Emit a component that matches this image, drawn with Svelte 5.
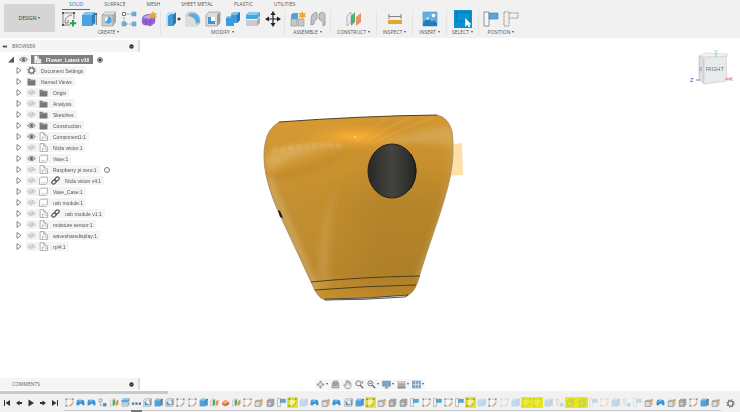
<script>
	let activeTab = 'SOLID';
	let tabs = ['SOLID', 'SURFACE', 'MESH', 'SHEET METAL', 'PLASTIC', 'UTILITIES'];

	let groups = [
		{ label: 'CREATE', tools: ['newsketch', 'extrude', 'hole', 'pattern', 'form'] },
		{ label: 'MODIFY', tools: ['presspull', 'fillet', 'shell', 'combine', 'split', 'move'] },
		{ label: 'ASSEMBLE', tools: ['newcomp', 'joint'] },
		{ label: 'CONSTRUCT', tools: ['plane'] },
		{ label: 'INSPECT', tools: ['measure'] },
		{ label: 'INSERT', tools: ['image'] },
		{ label: 'SELECT', tools: ['select'] },
		{ label: 'POSITION', tools: ['capture', 'revert'] }
	];

	let tree = [
		{ name: 'Document Settings', icon: 'gear' },
		{ name: 'Named Views', icon: 'folder' },
		{ name: 'Origin', icon: 'folder', eye: 'off' },
		{ name: 'Analysis', icon: 'folder', eye: 'off' },
		{ name: 'Sketches', icon: 'folder', eye: 'off' },
		{ name: 'Construction', icon: 'folder', eye: 'on' },
		{ name: 'Component1:1', icon: 'component', eye: 'on' },
		{ name: 'Nicla vision:1', icon: 'component', eye: 'off' },
		{ name: 'Vase:1', icon: 'body', eye: 'on' },
		{ name: 'Raspberry pi zero:1', icon: 'component', eye: 'off', radio: true },
		{ name: 'Nicla vision v4:1', icon: 'body', eye: 'off', linked: true },
		{ name: 'Vase_Case:1', icon: 'body', eye: 'off' },
		{ name: 'usb module:1', icon: 'body', eye: 'off' },
		{ name: 'usb module v1:1', icon: 'component', eye: 'off', linked: true },
		{ name: 'moisture sensor:1', icon: 'component', eye: 'off' },
		{ name: 'wavesharedisplay:1', icon: 'component', eye: 'off' },
		{ name: 'rpi4:1', icon: 'component', eye: 'off' }
	];

	// "!" = highlighted, "~" = suppressed
	let timeline = (
		'sketch revolve revolve comps plane split dots shell extrude shell sketch sketch extrude plane orange plane ' +
		'sketch bodystar graybox capture !sketch ~extrude revolve bodystar revolve shell extrude !sketch bodystar ' +
		'graybox graybox capture sketch capture sketch capture !sketch ~extrude sketch ~sketch ~extrude !~sketch ' +
		'!~sketch ~extrude ~comps !~graybox !~graybox ~capture ~sketch ~extrude ~comps ~capture bodystar revolve ' +
		'bodystar graybox sketch extrude bodystar'
	).split(' ').map((s) => ({
		icon: s.replace(/[!~]/g, ''),
		marked: s.includes('!'),
		faint: s.includes('~')
	}));

	let navTools = [
		{ icon: 'orbit', menu: true },
		{ icon: 'look' },
		{ icon: 'pan' },
		{ icon: 'zoom' },
		{ icon: 'fit', menu: true },
		{ icon: 'display', menu: true },
		{ icon: 'effects', menu: true },
		{ icon: 'grid', menu: true }
	];

	let playback = ['first', 'prev', 'play', 'next', 'last'];
</script>

{#snippet icon(name)}
	<svg class="icon" viewBox="0 0 16 16" aria-hidden="true">
		{#if name === 'newsketch'}
			<path d="M2 2h11M2 2v12h7M13 2v6" fill="none" stroke="#777" stroke-width=".9" />
			<path d="M4 12c0-5 2-7 7-8M4 12h3v-3" fill="none" stroke="#666" stroke-width=".8" />
			<path d="M1 1h2v2H1zM12 1h2v2h-2zM1 13h2v2H1z" fill="#555" />
			<path d="M12 9v6.500M8.800 12.300h6.400" stroke="#24a148" stroke-width="1.900" />
		{:else if name === 'sketch'}
			<path d="M2 2h12v7l-4 5H2z" fill="#fff8" stroke="#999" stroke-width="1" />
			<path d="M1 1h2v2H1zM13 1h2v2h-2zM1 13h2v2H1z" fill="#555" />
			<path d="M9 14l5-5" stroke="#e99b48" stroke-width="2.400" />
		{:else if name === 'extrude'}
			<path d="M1 4l3-3h10l-3 3z" fill="#83c4ee" />
			<path d="M1 4h10v11H1z" fill="#4aa3df" />
			<path d="M11 4l3-3v11l-3 3z" fill="#2c7fbc" />
			<path d="M15.200 14V2M14 4l1.200-2L16 4" fill="none" stroke="#444" stroke-width=".9" />
		{:else if name === 'hole'}
			<path d="M1 4l3-3h11l-3 3z" fill="#e9e9e9" stroke="#999" stroke-width=".6" />
			<path d="M1 4h11v11H1z" fill="#ccc" stroke="#999" stroke-width=".6" />
			<path d="M12 4l3-3v10l-3 4z" fill="#aaa" />
			<circle cx="7" cy="9" r="3.800" fill="#f8f8f8" stroke="#999" stroke-width=".5" />
			<path d="M7 5.500a3.500 3.500 0 1 1-3.200 5C6 10.500 7 8.500 7 5.500z" fill="#49a2dc" />
		{:else if name === 'pattern'}
			<path d="M3 3h10M3 3v10h10" fill="none" stroke="#999" stroke-dasharray="2 1" />
			<path d="M1.500 1.500h3v3h-3z" fill="#fff" stroke="#777" />
			<path d="M11 1h4v4h-4zM1 11h4v4H1zM11 11h4v4h-4z" fill="#67b3e8" stroke="#6391b3" stroke-width=".5" />
		{:else if name === 'form'}
			<path d="M1 7q1-3 5-4l7 1q2 1 1 8l-4 3-7-1q-3-1-2-7z" fill="#9168d3" />
			<path d="M2 7q2-3 5-3l5 1-3 3z" fill="#c2a5ec" />
			<path d="M2 10q4 2 7 1l5-3M9 8v7M5 7v7" fill="none" stroke="#7147b5" stroke-width=".7" />
			<path d="M12 0l1.200 2.300L16 2l-1.200 2.200L16 6.500l-2.700-.4L12 8.500l-1-2.400-2.500.4L9.800 4 8.500 2l2.400.3z" fill="#f5a72a" />
		{:else if name === 'presspull'}
			<path d="M1 4l3-3h6L7 4v11H1z" fill="#b9dff6" />
			<path d="M3 5l3-2h3v12H3z" fill="#3f9ad7" />
			<path d="M8 4l3-3v11l-3 3z" fill="#2c78ad" />
			<path d="M12 8h3" stroke="#333" stroke-width="1" />
			<path d="M13.500 6L16 8l-2.500 2z" fill="#333" />
		{:else if name === 'fillet'}
			<path d="M1 15V6q0-5 5-5 9 0 9 9v2l-3 3z" fill="#cdcdcd" stroke="#aaa" stroke-width=".5" />
			<path d="M1 15V6q3-2 6 1 5 2 5 8z" fill="#ddd" />
			<path d="M4 3q10-3 11 8l-4 2Q11 6 4 5z" fill="#59ace4" />
		{:else if name === 'shell'}
			<path d="M1 4l3-3h11v11l-3 3H1z" fill="#ddd" stroke="#888" stroke-width=".6" />
			<path d="M12 4l3-3v11l-3 3z" fill="#999" />
			<path d="M3 6h7v7H3z" fill="#fff" />
			<path d="M3 6h3v5l-3 2zM6 10h4v3H3z" fill="#3e97d4" />
		{:else if name === 'combine'}
			<path d="M6 3l3-2h6v8l-3 3H9v3H1V7l2-2h3z" fill="#4099d8" />
			<path d="M6 3l3-2h6l-3 3H6zM1 7l2-2h3v2z" fill="#7bc0ed" />
			<path d="M12 4l3-3v8l-3 3z" fill="#2878b3" />
		{:else if name === 'split'}
			<path d="M1 4l3-3h11v4l-3 3H1z" fill="#4aa4df" />
			<path d="M1 4l3-3h11l-3 3z" fill="#8bcbf1" />
			<path d="M1 9h11l3-3v6l-3 3H1z" fill="#aaa" />
			<path d="M1 9h11v6H1z" fill="#ccc" />
		{:else if name === 'move'}
			<path d="M8 2v12M2 8h12" stroke="#222" stroke-width="1.200" />
			<path d="M8 0l2.500 4h-5zM8 16l2.500-4h-5zM0 8l4-2.500v5zM16 8l-4-2.500v5z" fill="#222" />
		{:else if name === 'newcomp'}
			<path d="M1 4l2-2h5v6H1z" fill="#4ba4df" />
			<path d="M1 8h6v7H1zM8 8h6v7H8z" fill="#c7c7c7" stroke="#999" stroke-width=".7" />
			<path d="M12 0l1.200 2.300L16 2l-1.200 2.200L16 6.500l-2.700-.4L12 8.500l-1-2.400-2.500.4L9.800 4 8.500 2l2.400.3z" fill="#f5a72a" />
		{:else if name === 'joint'}
			<path d="M2 4l4-3 1 1v6l-3 2v3l-3 1V8zM9 3l3-2 3 2v11l-2 1v-4l-4-3z" fill="#c4c4c4" stroke="#8a8a8a" stroke-width=".7" />
		{:else if name === 'plane'}
			<path d="M1 5l4-4v10l-4 4z" fill="#eee" stroke="#999" stroke-width=".7" />
			<path d="M5 5l4-4v10l-4 4z" fill="#4daf72" />
			<path d="M10 6l5-4v9l-5 4z" fill="#ed9062" />
		{:else if name === 'measure'}
			<path d="M2 3v5M14 3v5M2 5.500h12" stroke="#777" stroke-width=".9" />
			<path d="M1 9h14v4H1z" fill="#e6a52b" />
		{:else if name === 'image'}
			<path d="M1 1h14v14H1z" fill="#61b0e6" stroke="#4c98cb" stroke-width=".6" />
			<circle cx="11.500" cy="4.500" r="1.800" fill="#fff" />
			<path d="M1 12l5-6 4 5 2-2 3 3v3H1z" fill="#247cb6" />
			<path d="M4 8l2-2 2 3-2-1-1 1z" fill="#fff" />
		{:else if name === 'select'}
			<path d="M0 0h16v16H0z" fill="#0a91d2" />
			<path d="M2 2h12v8H2z" fill="none" stroke="#075d89" stroke-dasharray="2 1" stroke-width=".6" />
			<path d="M10 7v8l2-1.800 1 2.300 1.500-.7-1-2h2z" fill="#fff" />
		{:else if name === 'capture'}
			<path d="M1 1h5v14H1z" fill="#f7f7f7" stroke="#888" stroke-width=".9" />
			<path d="M6 2h9v6H6z" fill="#55a7df" stroke="#397cac" stroke-width=".6" />
		{:else if name === 'revert'}
			<path d="M1 1h5v14H1zM6 2h9v5H6" fill="none" stroke="#999" stroke-width=".9" stroke-dasharray="3 .5" />
		{:else if name === 'revolve'}
			<path d="M1 13V7q1-5 5-4h4q5 0 5 6v4h-4v-3H6v3z" fill="#348ed0" />
			<path d="M2 7q2-4 7-3l3 2H6z" fill="#8dcaf1" />
		{:else if name === 'comps'}
			<path d="M2 2h5v5H2z" fill="#eee" stroke="#777" />
			<path d="M9 9h6v6H9z" fill="#3d96d3" />
			<path d="M4 8v5h4" fill="none" stroke="#777" />
		{:else if name === 'dots'}
			<path d="M0 6h4v4H0zM6 6h4v4H6zM12 6h4v4h-4z" fill="#5a7082" />
		{:else if name === 'orange'}
			<path d="M2 8l6-5 6 4v5l-7 3-5-3z" fill="#df7c38" />
			<path d="M2 8l6-5 6 4-7 3z" fill="#efae80" />
			<path d="M9 12l6-3" stroke="#6c6c6c" stroke-width="1.500" />
		{:else if name === 'bodystar'}
			<path d="M2 6l3-2h9v8l-3 3H2z" fill="#ddd" stroke="#777" />
			<path d="M2 6h9v9M11 6l3-2" fill="none" stroke="#777" />
			<path d="M9 6l5-5 2 3-4 4z" fill="#f0a03a" />
		{:else if name === 'graybox'}
			<path d="M2 5l3-3h9v10l-3 3H2z" fill="#bbb" stroke="#777" />
			<path d="M2 5h9v10M11 5l3-3" fill="none" stroke="#777" />
			<path d="M4 8h5v4H4z" fill="#eee" stroke="#777" stroke-width=".7" />
		{:else if name === 'gear'}
			<circle cx="8" cy="8" r="4.600" fill="none" stroke="#777" stroke-width="2.400" />
			<circle cx="8" cy="8" r="6.500" fill="none" stroke="#777" stroke-width="2" stroke-dasharray="2.500 2.600" />
		{:else if name === 'folder'}
			<path d="M1 3h5l1 2h8v10H1z" fill="#777" />
			<path d="M1 6h14" stroke="#bbb" stroke-width=".7" />
		{:else if name === 'component'}
			<path d="M2 1h6l3 3v3h4v8H2z" fill="#fff" stroke="#888" stroke-width="1.100" />
			<path d="M8 1v4h3M6 15V9h4M10 11h5" fill="none" stroke="#888" />
		{:else if name === 'body'}
			<path d="M1 5l3-3h11v9l-3 4H1z" fill="#fff" stroke="#888" stroke-width="1.100" />
			<path d="M4 12h6l2-2" fill="none" stroke="#999" />
		{:else if name === 'link'}
			<g transform="rotate(-45 8 8)" fill="none" stroke="#444" stroke-width="1.900">
				<rect x="0" y="5" width="8.500" height="6" rx="3" />
				<rect x="7.500" y="5" width="8.500" height="6" rx="3" />
			</g>
		{:else if name === 'eye-on' || name === 'eye-off'}
			<g opacity={name === 'eye-on' ? 1 : 0.45}>
				<path d="M1 8q7-8 14 0-7 8-14 0z" fill="#ddd" stroke="#666" stroke-width="1.300" />
				<circle cx="8" cy="8" r="2.800" fill="#666" />
			</g>
			{#if name === 'eye-off'}<path d="M6 3l4 10" stroke="#f3f3f3" stroke-width="1.500" />{/if}
		{:else if name === 'orbit'}
			<path d="M8 1l3 3H5zM8 15l3-3H5zM1 8l3-3v6zM15 8l-3-3v6z" fill="#888" />
			<circle cx="8" cy="8" r="3.500" fill="#ddd" stroke="#888" />
		{:else if name === 'look'}
			<path d="M2 6h12v8H2zM4 2h8v3H4z" fill="#ccc" stroke="#777" stroke-width="1.200" />
			<path d="M4 9h8" stroke="#777" stroke-width="2" />
		{:else if name === 'pan'}
			<path d="M5 15L1 9l1-1 3 2V3h2V1h2v2h3v2h2v6l-2 4z" fill="#eee" stroke="#777" stroke-width="1.100" />
			<path d="M7 3v5M9.500 3v5M12 5v4" stroke="#777" stroke-width=".8" />
		{:else if name === 'zoom' || name === 'fit'}
			<circle cx="6" cy="6" r="4.500" fill="#eee" stroke="#666" stroke-width="1.400" />
			<path d="M9.500 9.500l5 5" stroke="#555" stroke-width="2.300" />
			{#if name === 'zoom'}
				<path d="M13 2v5M11 4l2-2 2 2" fill="none" stroke="#666" />
			{:else}
				<path d="M4 6h4" stroke="#777" stroke-width="2" />
			{/if}
		{:else if name === 'display'}
			<path d="M1 2h14v9H1z" fill="#76a9d6" stroke="#667f95" />
			<path d="M5 14h7M8 11v3" stroke="#777" stroke-width="1.500" />
		{:else if name === 'effects'}
			<path d="M1 2h14v12H1z" fill="#aaa" />
			<path d="M1 2h14v4H1z" fill="#ccc" />
			<path d="M1 14h14" stroke="#777" stroke-width="2" />
		{:else if name === 'grid'}
			<path d="M1 2h14v12H1z" fill="#7ba8d1" stroke="#59799b" />
			<path d="M1 8h14M6 2v12M11 2v12" stroke="#e5edf5" stroke-width="1.200" />
		{:else if name === 'first'}
			<path d="M3 2v12" stroke="#333" stroke-width="2" /><path d="M14 2v12L5 8z" fill="#333" />
		{:else if name === 'prev'}
			<path d="M9 3v10L2 8zM9 6h5v4H9z" fill="#333" />
		{:else if name === 'play'}
			<path d="M3 1l11 7-11 7z" fill="#333" />
		{:else if name === 'next'}
			<path d="M7 3v10l7-5zM2 6h5v4H2z" fill="#333" />
		{:else if name === 'last'}
			<path d="M13 2v12" stroke="#333" stroke-width="2" /><path d="M2 2v12l9-6z" fill="#333" />
		{:else if name === 'arrow'}
			<path d="M4 2l8 6-8 6z" fill="#fff" stroke="#777" stroke-width="1.700" />
		{:else if name === 'open'}
			<path d="M14 2v12H2z" fill="#555" />
		{:else if name === 'collapse'}
			<path d="M8 3v10L1 8zM15 3v10L8 8z" fill="#333" />
		{:else if name === 'options'}
			<circle cx="8" cy="8" r="7" fill="#333" />
			<path d="M5 8h6" stroke="#bbb" stroke-width="1.500" />
		{/if}
	</svg>
{/snippet}

<div class="app">
	<header>
		<button class="design">DESIGN <i class="caret"></i></button>
		<div class="ribbon">
			<nav>
				{#each tabs as tab}
					<button class="tab" class:active={tab === activeTab} on:click={() => (activeTab = tab)}>{tab}</button>
				{/each}
			</nav>
			<div class="groups">
				{#each groups as group}
					<div class="group">
						<div class="tools">
							{#each group.tools as tool}
								<button class="tool" class:selected={tool === 'select'} aria-label={tool}>{@render icon(tool)}</button>
							{/each}
						</div>
						<button class="menu">{group.label} <i class="caret"></i></button>
					</div>
				{/each}
			</div>
		</div>
	</header>

	<main>
		<svg class="scene" viewBox="0 38 740 353" aria-label="Vase model">
			<defs>
				<linearGradient id="side" x1="0" x2="1" y1="0" y2="0">
					<stop offset="0" stop-color="#b58b45" />
					<stop offset=".06" stop-color="#c99537" />
					<stop offset=".3" stop-color="#c8922f" />
					<stop offset=".6" stop-color="#b5842b" />
					<stop offset=".88" stop-color="#b68427" />
					<stop offset=".97" stop-color="#c28e34" />
					<stop offset="1" stop-color="#a78853" />
				</linearGradient>
				<linearGradient id="shade" x1="0" x2="0" y1="0" y2="1">
					<stop offset="0" stop-color="#dc9c33" stop-opacity=".85" />
					<stop offset=".3" stop-color="#d0962f" stop-opacity=".6" />
					<stop offset=".55" stop-color="#b0812a" stop-opacity=".25" />
					<stop offset=".84" stop-color="#a17626" stop-opacity=".35" />
					<stop offset="1" stop-color="#d0922a" stop-opacity=".4" />
				</linearGradient>
				<radialGradient id="glow">
					<stop offset="0" stop-color="#fcb136" />
					<stop offset="1" stop-color="#e5a02f" stop-opacity="0" />
				</radialGradient>
				<linearGradient id="lens" x1="0" x2="1" y1="0" y2="0">
					<stop offset="0" stop-color="#282827" />
					<stop offset=".5" stop-color="#444440" />
					<stop offset="1" stop-color="#252524" />
				</linearGradient>
				<filter id="soft" x="-20%" y="-20%" width="140%" height="140%"><feGaussianBlur stdDeviation="3" /></filter>
				<clipPath id="outline">
					<path d="M279 122Q360 116 437 115Q448 117 452 131Q455 153 450 178C443 209 430 241 420 274Q416 292 407 296L325 300Q317 298 312 284L278 211Q260 170 265 144Q267 129 279 122z" />
				</clipPath>
			</defs>
			<path d="M445 145l17-2 1 32-18 1z" fill="#ffdfa7" />
			<g clip-path="url(#outline)">
				<path d="M260 110h200v195H260z" fill="url(#side)" />
				<path d="M260 110h200v195H260z" fill="url(#shade)" />
				<ellipse cx="355" cy="137" rx="60" ry="14" fill="url(#glow)" />
				<g filter="url(#soft)">
					<path d="M264 160Q275 139 350 145Q310 147 268 171z" fill="#e6bd77" opacity=".5" />
					<path d="M266 175Q310 166 355 148Q320 178 274 181z" fill="#bb8428" opacity=".5" />
					<path d="M455 126Q415 128 375 146Q420 139 455 147z" fill="#dfbd80" opacity=".4" />
					<path d="M318 285Q316 225 337 185Q326 240 330 288z" fill="#d6ad69" opacity=".35" />
					<path d="M415 280Q439 219 449 178L454 130Q458 173 425 279z" fill="#d1ad6f" opacity=".5" />
					<path d="M267 176Q286 220 317 292" fill="none" stroke="#d6b57a" stroke-width="4" />
				</g>
				<path d="M272 151Q315 142 343 147" fill="none" stroke="#edcb8f" stroke-width="5" stroke-dasharray="6 2" opacity=".18" />
				<path d="M355 143Q369 130 390 116M365 144Q382 130 410 117M372 144Q397 130 433 118" fill="none" stroke="#f0c374" opacity=".14" stroke-width="2" />
				<circle cx="355" cy="137" r="1" fill="#ffd27a" />
			</g>
			<path d="M437 115Q448 117 452 131Q455 153 450 178C443 209 430 241 420 274Q416 292 407 296L325 300Q317 298 312 284L278 211Q260 170 265 144Q267 129 279 122" fill="none" stroke="#a39272" stroke-width=".8" />
			<path d="M279 122Q360 116 437 115M311 282Q360 277 420 276M315 290Q365 286 416 285" fill="none" stroke="#453817" stroke-width=".9" />
			<path d="M325 299Q366 299 408 295L405 297Q365 300 325 300z" fill="#dce4dc" stroke="#333" stroke-width=".8" />
			<ellipse cx="392" cy="171" rx="24" ry="27" fill="url(#lens)" stroke="#20201c" />
			<path d="M411 154Q421 170 411 188" fill="none" stroke="#171714" stroke-width="1" />
			<path d="M278 210l2 1 3 7-3-1z" fill="#191919" />
		</svg>

		<div class="dock">
			<section class="browser">
				<div class="panel-head">
					<span class="fold">{@render icon('collapse')}</span>
					<h2>BROWSER</h2>
					<button aria-label="Browser options">{@render icon('options')}</button>
				</div>
				<ul>
					<li class="root">
						{@render icon('open')}
						<span class="chip">
							{@render icon('eye-on')}
							<span class="doc">{@render icon('component')} <b>Flower_Latest v16</b></span>
						</span>
						<i class="radio on"></i>
					</li>
					{#each tree as node}
						<li>
							{@render icon('arrow')}
							<span class="chip">
								{#if node.eye}{@render icon('eye-' + node.eye)}{/if}
								{@render icon(node.icon)}
								{#if node.linked}{@render icon('link')}{/if}
								<span>{node.name}</span>
							</span>
							{#if node.radio}<i class="radio"></i>{/if}
						</li>
					{/each}
				</ul>
			</section>

			<svg class="cube" viewBox="0 0 48 42" aria-label="View cube">
				<path d="M12 8l5-3 24 1-2 4z" fill="#f3f3f3" stroke="#ccc" stroke-width=".6" />
				<path d="M12 8l5 2v26l-5-5z" fill="#ddd" stroke="#bbb" stroke-width=".6" />
				<path d="M17 10l22-2 1 25-23 3z" fill="#e8eaeb" stroke="#ccc" stroke-width=".7" />
				<path d="M9 32h4" stroke="#6d77db" />
				<path d="M38 31h5" stroke="#e76c6c" />
				<path d="M29 6v3" stroke="#70d980" />
				<text x="28" y="23" text-anchor="middle" fill="#707780">RIGHT</text>
				<text x="12" y="23" fill="#999" class="small">B</text>
				<text x="27" y="6" fill="#56d36c">Y</text>
				<text x="3" y="34" fill="#4250cf">Z</text>
				<text x="42" y="33" fill="#e45555">X</text>
			</svg>
		</div>

		<div class="bottom">
			<div class="panel-head">
				<span class="fold"></span>
				<h2>COMMENTS</h2>
				<button aria-label="Comment options">{@render icon('options')}</button>
			</div>
			<div class="navbar">
				{#each navTools as tool}
					<button aria-label={tool.icon}>{@render icon(tool.icon)}{#if tool.menu}<i class="caret"></i>{/if}</button>
				{/each}
			</div>
		</div>
	</main>

	<footer>
		<div class="scrollbar"></div>
		<div class="history">
			<div class="playback">
				{#each playback as step}
					<button aria-label={step}>{@render icon(step)}</button>
				{/each}
			</div>
			<ol>
				{#each timeline as item}
					<li class:marked={item.marked} class:faint={item.faint} class:marker={item.icon === 'dots'}>{@render icon(item.icon)}</li>
				{/each}
			</ol>
			<button class="settings" aria-label="Timeline settings">{@render icon('gear')}</button>
		</div>
	</footer>
</div>

<style>
	:global(body) {
		background: #fff;
	}

	.app {
		display: flex;
		flex-direction: column;
		min-height: 100vh;
		font: 5px/6px "Liberation Sans", Arial, sans-serif;
		color: #555;
	}

	button {
		display: flex;
		align-items: center;
		justify-content: center;
		padding: 0;
		border: none;
		background: none;
		font: inherit;
		color: inherit;
	}

	.icon {
		display: block;
		width: 9px;
		height: 9px;
		flex: none;
	}

	.caret {
		margin-left: 2px;
		border: 1px solid transparent;
		border-top: 2px solid #555;
		border-bottom: 0;
	}

	header {
		display: flex;
		height: 38px;
		background: #f1f1f1;
		font-family: "Open Sans", sans-serif;
	}

	.design {
		width: 51px;
		height: 28px;
		margin: 4px 2px 0 4px;
		border-radius: 2px;
		background: #d5d5d5;
		color: #333;
	}

	nav {
		display: flex;
		gap: 7px;
		height: 10px;
		padding-left: 5px;
	}

	.tab {
		padding: 0 7px 1px;
		border-bottom: 1px solid transparent;
	}

	.tab.active {
		color: #0b8ac8;
		border-color: #0b8ac8;
	}

	.groups {
		display: grid;
		grid-template-columns: 104px 124px 46px 46px 36px 34px 32px 44px;
	}

	.group {
		border-right: 1px solid #e4e4e4;
	}

	.group:last-child {
		border: none;
	}

	.tools {
		display: flex;
		justify-content: center;
		gap: 4px;
		height: 18px;
		align-items: center;
	}

	.tool .icon {
		width: 16px;
		height: 16px;
	}

	.tool.selected .icon {
		width: 18px;
		height: 18px;
	}

	.menu {
		width: 100%;
		height: 7px;
	}

	main {
		position: relative;
		flex: 1;
		display: flex;
		flex-direction: column;
		justify-content: space-between;
	}

	.scene {
		position: absolute;
		inset: 0;
		width: 100%;
		height: 100%;
	}

	.dock,
	.bottom {
		position: relative;
		display: flex;
		justify-content: space-between;
	}

	.dock {
		padding-top: 2px;
	}

	.panel-head {
		display: flex;
		align-items: center;
		width: 140px;
		height: 12px;
		box-sizing: border-box;
		padding: 0 4px 0 2px;
		border-right: 2px solid #ddd;
		background: #f5f5f5;
	}

	.panel-head h2 {
		flex: 1;
		margin: 0;
		font: 5px/6px "Open Sans", sans-serif;
		color: #666;
	}

	.fold {
		width: 10px;
	}

	.panel-head .icon {
		width: 5px;
		height: 5px;
	}

	ul,
	ol {
		margin: 0;
		padding: 0;
		list-style: none;
	}

	ul {
		padding-top: 2px;
	}

	ul li {
		display: flex;
		align-items: center;
		height: 11px;
		gap: 3px;
		padding-left: 15px;
	}

	ul li > .icon {
		width: 8px;
	}

	ul .root {
		padding-left: 7px;
	}

	.chip {
		display: flex;
		align-items: center;
		gap: 3px;
		height: 9px;
		padding: 0 3px 0 1px;
		background: #f4f4f4;
		white-space: nowrap;
	}

	.chip > span {
		padding-left: 2px;
	}

	.chip .doc {
		display: flex;
		align-items: center;
		gap: 4px;
		height: 9px;
		margin-right: -3px;
		padding-right: 4px;
		background: #808080;
		color: #fff;
	}

	.radio {
		width: 4px;
		height: 4px;
		margin-left: 1px;
		border: 1px solid #777;
		border-radius: 50%;
	}

	.radio.on {
		background: radial-gradient(#333 1px, #fff 2px);
	}

	.cube {
		width: 48px;
		height: 42px;
		margin: 8px 5px 0 0;
		font-size: 6px;
	}

	.cube .small {
		font-size: 5px;
	}

	.bottom {
		align-items: center;
		padding-bottom: 1px;
	}

	.navbar {
		display: flex;
		gap: 3px;
		margin: 0 auto 0 175px;
		padding: 1px;
		background: #f7f7f7;
	}

	.navbar .caret {
		margin-left: 1px;
	}

	footer {
		height: 21px;
		background: #f1f1f1;
	}

	.scrollbar {
		width: 168px;
		height: 3px;
		background: #c9c9c9;
	}

	.history {
		display: flex;
		align-items: center;
		height: 18px;
	}

	.playback {
		display: flex;
		gap: 3px;
		padding-left: 2px;
		margin-right: 5px;
	}

	.playback .icon {
		width: 8px;
		height: 8px;
	}

	.playback button {
		width: 9px;
	}

	ol {
		flex: 1;
		display: flex;
		height: 15px;
		border-bottom: 1px solid #ccc;
	}

	ol li {
		flex: 1;
		display: flex;
		align-items: center;
		justify-content: center;
		height: 11px;
		margin-top: 2px;
	}

	ol li.marked {
		background: #e6ea1c;
	}

	ol li.faint .icon {
		opacity: 0.3;
	}

	ol li.marker {
		height: 13px;
		border-bottom: 2px solid #777;
	}

	.settings {
		width: 19px;
	}
</style>
